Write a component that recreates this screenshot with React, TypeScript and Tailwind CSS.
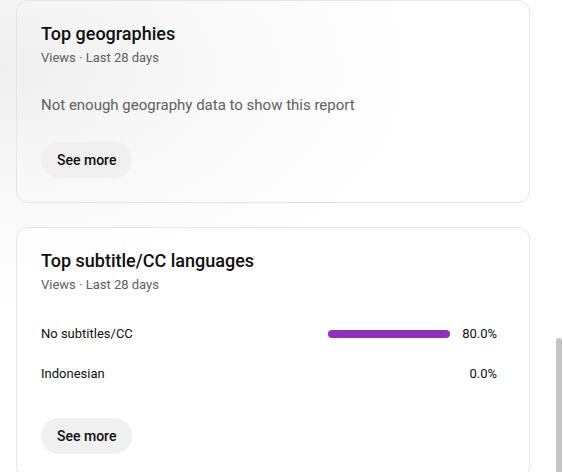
const rows = [
  { label: "No subtitles/CC", value: 80, pct: "80.0%" },
  { label: "Indonesian", value: 0, pct: "0.0%" },
];

function SeeMore() {
  return (
    <button className="h-9 px-4 rounded-full bg-[#f0f0f0] text-sm font-medium text-[#0f0f0f]">
      See more
    </button>
  );
}

function CardHeader({ title }: { title: string }) {
  return (
    <div className="flex flex-col">
      <h2 className="text-lg leading-6 font-medium text-[#0f0f0f]">{title}</h2>
      <p className="mt-[3px] text-[13px] leading-[18px] text-[#606060]">
        Views · Last 28 days
      </p>
    </div>
  );
}

export default function App() {
  return (
    <div
      className="relative h-[472px] w-[563px] overflow-hidden bg-[radial-gradient(ellipse_420px_240px_at_0px_70px,#efefef_0%,#f7f7f7_40%,#ffffff_100%)] pl-4 pr-[33px]"
      style={{ fontFamily: "Roboto, 'Noto Sans', sans-serif" }}
    >
      <div className="flex flex-col gap-6">
        <section className="rounded-xl border border-[#e5e5e5] pl-6 pr-8 pt-[21px] pb-6">
          <CardHeader title="Top geographies" />
          <p className="mt-7 text-[15px] leading-5 text-[#606060]">
            Not enough geography data to show this report
          </p>
          <div className="mt-[27px]">
            <SeeMore />
          </div>
        </section>

        <section className="rounded-xl border border-[#e5e5e5] bg-white/70 pl-6 pr-8 pt-[21px] pb-6">
          <CardHeader title="Top subtitle/CC languages" />
          <div className="mt-5 flex flex-col">
            {rows.map((r) => (
              <div key={r.label} className="flex h-10 items-center text-[13px] text-[#0f0f0f]">
                <span className="flex-1">{r.label}</span>
                <div className="w-[122px] h-2">
                  {r.value > 0 && (
                    <div className="h-2 w-full rounded-full bg-[#8f30bd]" />
                  )}
                </div>
                <span className="w-[47px] text-right">{r.pct}</span>
              </div>
            ))}
          </div>
          <div className="mt-6">
            <SeeMore />
          </div>
        </section>
      </div>

      <div className="absolute right-[1px] top-[338px] bottom-0 w-[6px] rounded-t-[3px] bg-[#c4c4c4]" />
    </div>
  );
}
